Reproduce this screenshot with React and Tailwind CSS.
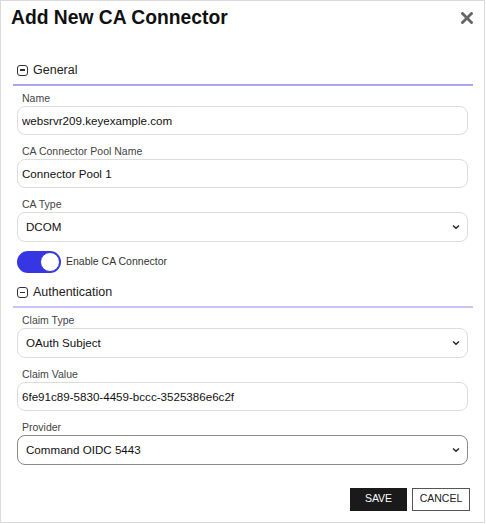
import React from 'react';

const font = { fontFamily: '"Liberation Sans", Arial, sans-serif' };

// small boxed minus used on collapsible section headers
const CollapseIcon = () => (
    <span className="w-[11px] h-[11px] rounded-[3px] border-[1.5px] border-[#333] flex items-center justify-center">
        <span className="block w-[5px] h-[1.5px] bg-[#333]"></span>
    </span>
);

const SectionHeader = ({ title, lineClass }) => (
    <div>
        <div className="flex items-center gap-[5px] h-[16px] pl-[4px]">
            <CollapseIcon />
            <span className="text-[12.5px] text-[#222] leading-none">{title}</span>
        </div>
        <div className={lineClass}></div>
    </div>
);

const Label = ({ children }) => (
    <div className="h-[12px] pl-[5px] text-[10.5px] leading-[12px] text-[#444]">{children}</div>
);

const TextField = ({ label, value, className = '' }) => (
    <div className={className}>
        <Label>{label}</Label>
        <input
            readOnly
            value={value}
            className="mt-[2px] block w-full h-[29px] px-[4px] rounded-[8px] border border-[#dcdcdc] bg-white text-[11.6px] text-[#111] outline-none"
            style={font}
        />
    </div>
);

const Chevron = () => (
    <svg width="8" height="5" viewBox="0 0 8 5" className="absolute right-[7px] top-1/2 -translate-y-1/2">
        <path d="M1 1 L4 3.8 L7 1" fill="none" stroke="#222" strokeWidth="1.4" />
    </svg>
);

const SelectField = ({ label, value, className = '', border = 'border-[#dcdcdc]' }) => (
    <div className={className}>
        <Label>{label}</Label>
        <div className={`relative mt-[2px] h-[30px] rounded-[8px] border bg-white flex items-center pl-[8px] ${border}`}>
            <span className="text-[11.6px] text-[#111]">{value}</span>
            <Chevron />
        </div>
    </div>
);

const Toggle = ({ label }) => (
    <div className="flex items-center gap-[5px] mt-[9px]">
        <div className="w-[44px] h-[22px] rounded-full bg-[#3636e2] flex items-center justify-end pr-[1px]">
            <span className="block w-[20px] h-[20px] rounded-full bg-white border border-[#3636e2]"></span>
        </div>
        <span className="text-[10.5px] text-[#333]">{label}</span>
    </div>
);

export default function App() {
    return (
        <div className="w-[486px] h-[524px] bg-white overflow-hidden" style={font}>
            <div className="w-[485px] h-[523px] border border-[#dadada] pl-[12px] pr-[11px] flex flex-col">
                {/* Header */}
                <div className="flex items-start justify-between pt-[6px]">
                    <h1 className="text-[19.3px] leading-[22px] font-bold text-[#111] -ml-[2px]">Add New CA Connector</h1>
                    <button className="mt-[4px] mr-[-1px] w-[14px] h-[14px] flex items-center justify-center">
                        <svg width="12" height="12" viewBox="0 0 12 12">
                            <path d="M1.5 1.5 L10.5 10.5 M10.5 1.5 L1.5 10.5" stroke="#666" strokeWidth="2.8" strokeLinecap="square" />
                        </svg>
                    </button>
                </div>

                <div className="mt-[33px]">
                    <SectionHeader title="General" lineClass="mt-[6px] h-[1.5px] bg-[#aaa6f0]" />
                </div>

                <div className="pl-[4px] pr-[5px]">
                    <TextField className="mt-[6px]" label="Name" value="websrvr209.keyexample.com" />
                    <TextField className="mt-[10px]" label="CA Connector Pool Name" value="Connector Pool 1" />
                    <SelectField className="mt-[10px]" label="CA Type" value="DCOM" />
                    <Toggle label="Enable CA Connector" />
                </div>

                <div className="mt-[12px]">
                    <SectionHeader title="Authentication" lineClass="mt-[5px] h-[2px] bg-[#c9c6f6]" />
                </div>

                <div className="pl-[4px] pr-[5px]">
                    <SelectField className="mt-[6px]" label="Claim Type" value="OAuth Subject" />
                    <TextField className="mt-[10px]" label="Claim Value" value="6fe91c89-5830-4459-bccc-3525386e6c2f" />
                    <SelectField className="mt-[10px]" label="Provider" value="Command OIDC 5443" border="border-[#8a8a8a]" />
                </div>

                {/* Footer actions */}
                <div className="mt-[23px] flex justify-end gap-[5px] pr-[3px]">
                    <button className="w-[57px] h-[23px] bg-[#1a1a1a] text-white text-[10.5px]">SAVE</button>
                    <button className="w-[58px] h-[23px] bg-white border border-[#555] text-[#222] text-[10.5px]">CANCEL</button>
                </div>
            </div>
        </div>
    );
}
